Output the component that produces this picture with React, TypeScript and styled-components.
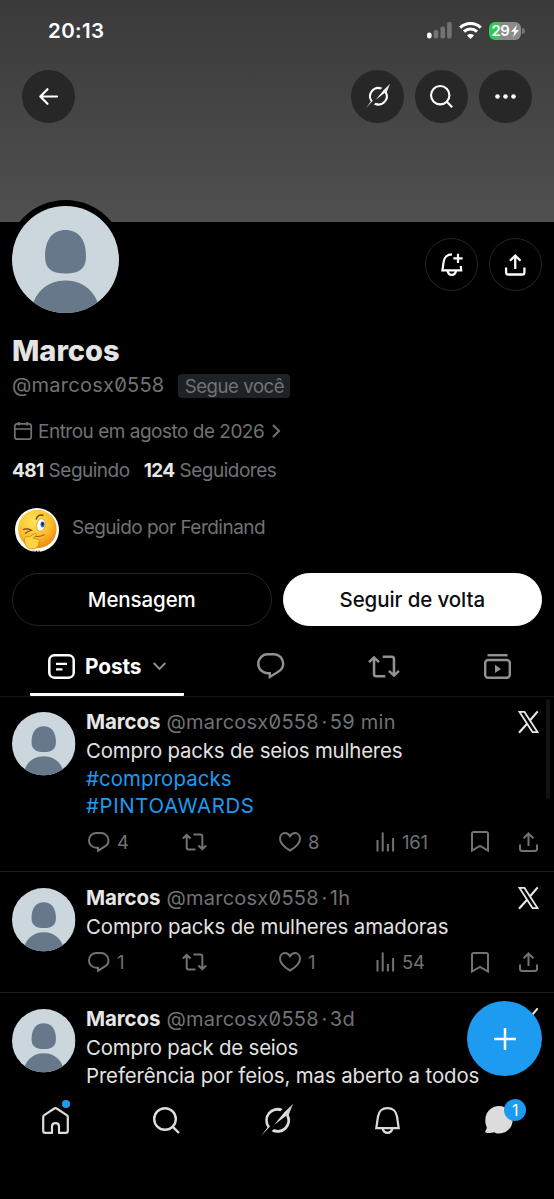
import React from 'react';
import styled, { createGlobalStyle } from 'styled-components';

const Global = createGlobalStyle`
  * { box-sizing: border-box; }
  html, body { margin: 0; padding: 0; background: #000; }
  body { font-family: Inter, "Liberation Sans", sans-serif; color: #e7e7e7; overflow: hidden; }
  svg { display: block; flex: none; overflow: visible; }
`;

const Screen = styled.div`
  position: relative;
  width: 554px;
  height: 1199px;
  display: flex;
  flex-direction: column;
  overflow: hidden;
  background: #000;
`;

const Banner = styled.header`
  height: 222px;
  flex: none;
  background: linear-gradient(#3a3a3a, #505050);
`;

const StatusBar = styled.div`
  height: 61px;
  padding: 0 29px 0 48px;
  display: flex;
  align-items: center;
  justify-content: space-between;
`;

const Clock = styled.span`
  font-size: 20.5px;
  font-weight: 600;
  letter-spacing: 0.4px;
  color: #fff;
`;

const StatusIcons = styled.div`
  display: flex;
  align-items: center;
  gap: 7px;
`;

const Battery = styled.div`
  width: 32px;
  height: 18px;
  border-radius: 6px;
  display: flex;
  align-items: center;
  justify-content: center;
  gap: 1px;
  background: linear-gradient(90deg, #34c759 0 10px, #8b8b8b 10px);
  color: #fff;
  font-size: 15px;
  font-weight: 600;
  letter-spacing: -0.4px;
`;

const BatteryWrap = styled.div`
  display: flex;
  align-items: center;
  gap: 1px;
`;

const BatteryTip = styled.i`
  width: 3px;
  height: 6px;
  border-radius: 0 3px 3px 0;
  background: #777;
`;

const TopButtons = styled.nav`
  margin-top: 8.5px;
  padding: 0 22px;
  display: flex;
  gap: 11px;
`;

const RoundButton = styled.button<{ $outlined?: boolean; $push?: boolean }>`
  width: 53px;
  height: 53px;
  padding: 0;
  flex: none;
  border-radius: 50%;
  border: ${p => (p.$outlined ? '1px solid #242627' : '0')};
  background: ${p => (p.$outlined ? '#000' : '#272727')};
  color: #fff;
  display: flex;
  align-items: center;
  justify-content: center;
  margin-right: ${p => (p.$push ? 'auto' : '0')};
`;

const Profile = styled.section`
  height: 405px;
  flex: none;
  padding: 0 12px;
  display: flex;
  flex-direction: column;
`;

const ProfileTop = styled.div`
  height: 113px;
  flex: none;
  display: flex;
  justify-content: space-between;
  align-items: flex-start;
`;

const AvatarRing = styled.div`
  margin: -22.5px 0 0 -6px;
  padding: 6px;
  border-radius: 50%;
  background: #000;
`;

const ProfileButtons = styled.div`
  display: flex;
  gap: 11px;
  padding-top: 16px;
`;

const Name = styled.h1`
  margin: 0;
  height: 34px;
  line-height: 32px;
  font-size: 29px;
  font-weight: 800;
  letter-spacing: 0;
  color: #e4e4e4;
`;

const HandleRow = styled.div`
  height: 32px;
  display: flex;
  align-items: center;
  gap: 14px;
`;

const Muted = styled.span<{ $ls?: number; $zero?: boolean; $size?: number }>`
  font-size: ${p => p.$size ?? 20}px;
  letter-spacing: ${p => p.$ls ?? 0}px;
  font-feature-settings: ${p => (p.$zero ? '"zero"' : 'normal')};
  color: #6f7375;
  white-space: nowrap;
`;

const Separator = styled.span`
  width: 11px;
  margin: 0 -6px;
  font-size: 20px;
  text-align: center;
  color: #6f7375;
`;

const Chip = styled.span`
  width: 112px;
  height: 24px;
  margin-top: 2px;
  border-radius: 4px;
  background: #1f2225;
  color: #6f7375;
  font-size: 18.6px;
  letter-spacing: -0.45px;
  line-height: 24px;
  text-align: center;
  white-space: nowrap;
`;

const JoinedRow = styled.div`
  height: 36px;
  margin-top: 12px;
  padding-left: 2px;
  display: flex;
  align-items: center;
  color: #6f7375;
  gap: 6px;
`;

const JoinedChevron = styled.span`
  margin-left: 2px;
`;

const Counts = styled.div`
  height: 42px;
  display: flex;
  align-items: center;
  gap: 14px;
`;

const Count = styled.span`
  display: flex;
  align-items: baseline;
  gap: 5px;
`;

const CountValue = styled.b`
  font-size: 19px;
  font-weight: 700;
  letter-spacing: -0.6px;
  color: #e7e7e7;
`;

const FollowedBy = styled.div`
  margin-top: 17px;
  padding-left: 3px;
  height: 44px;
  display: flex;
  align-items: center;
  gap: 13px;
`;

const FollowedText = styled.div`
  padding-bottom: 5px;
`;

const Actions = styled.div`
  margin-top: 21px;
  display: grid;
  grid-template-columns: 1fr 1fr;
  gap: 11px;
`;

const PillButton = styled.button<{ $filled?: boolean }>`
  height: 53px;
  border-radius: 27px;
  border: 1px solid ${p => (p.$filled ? '#fff' : '#232526')};
  background: ${p => (p.$filled ? '#fff' : '#000')};
  color: ${p => (p.$filled ? '#0b0d0f' : '#fff')};
  font-family: inherit;
  font-size: 20.5px;
  font-weight: 500;
  letter-spacing: -0.1px;
`;

const Tabs = styled.nav`
  height: 70px;
  flex: none;
  display: grid;
  grid-template-columns: 154px 1fr;
  padding: 0 0 0 30px;
  border-bottom: 1px solid #151617;
`;

const ActiveTab = styled.div`
  display: flex;
  align-items: center;
  justify-content: center;
  padding: 13px 0 1px;
  border-bottom: 3px solid #fff;
  border-radius: 1px;
  color: #fff;
`;

const TabList = styled.div`
  display: grid;
  grid-template-columns: 27px 32px 27px;
  align-items: center;
  justify-content: space-between;
  width: 254px;
  margin-left: 73px;
  padding-top: 10px;
  color: #929292;
`;

const TabLabel = styled.span`
  margin: 0 12px 0 10.5px;
  font-size: 20.8px;
  font-weight: 700;
  letter-spacing: -0.1px;
`;

const Feed = styled.main`
  flex: 1;
  min-height: 0;
  overflow: hidden;
`;

const PostCard = styled.article`
  display: grid;
  grid-template-columns: 63px 1fr;
  column-gap: 11px;
  padding: 11px 15px 17px 12px;
  border-bottom: 1px solid #1d1f20;
  & + & { padding-top: 12px; padding-bottom: 18px; }
`;

const PostAvatar = styled.div`
  padding-top: 4px;
`;

const PostBody = styled.div`
  min-width: 0;
`;

const PostHead = styled.div`
  height: 28px;
  margin-bottom: 1px;
  display: flex;
  align-items: center;
  justify-content: space-between;
`;

const Byline = styled.div`
  display: flex;
  align-items: baseline;
  gap: 6px;
  margin-top: -1px;
`;

const Author = styled.b`
  font-size: 20.5px;
  font-weight: 700;
  letter-spacing: -0.1px;
  color: #e7e7e7;
`;

const PostText = styled.p`
  margin: 0;
  font-size: 20.4px;
  line-height: 27.6px;
  color: #e2e2e2;
`;

const Line = styled.span<{ $tag?: boolean; $ls: number }>`
  display: block;
  white-space: nowrap;
  letter-spacing: ${p => p.$ls}px;
  color: ${p => (p.$tag ? '#1d9bf0' : 'inherit')};
`;

const Metrics = styled.div`
  height: 24px;
  margin-top: 10px;
  padding-left: 2px;
  display: grid;
  grid-template-columns: 94px 96.5px 97px 95.5px 47.5px auto;
  align-items: center;
  color: #6f7375;
`;

const Metric = styled.span`
  display: flex;
  align-items: center;
  gap: 7.5px;
  font-size: 18.5px;
  letter-spacing: -0.2px;
`;

const BottomBar = styled.nav`
  height: 112px;
  flex: none;
  padding-top: 17px;
  display: grid;
  grid-template-columns: repeat(5, 110.8px);
  background: #000;
  color: #dcdcdc;
`;

const NavItem = styled.div`
  position: relative;
  height: 32px;
  display: flex;
  align-items: center;
  justify-content: center;
`;

const Dot = styled.i`
  position: absolute;
  top: -4px;
  left: 62px;
  width: 8px;
  height: 8px;
  border-radius: 50%;
  background: #1d9bf0;
`;

const Badge = styled.span`
  position: absolute;
  top: -5px;
  left: 61px;
  width: 22px;
  height: 22px;
  border-radius: 50%;
  background: #1d9bf0;
  color: #fff;
  font-size: 16px;
  line-height: 22px;
  text-align: center;
`;

const Fab = styled.button`
  position: absolute;
  right: 12px;
  bottom: 123px;
  width: 75px;
  height: 75px;
  padding: 0;
  border: 0;
  border-radius: 50%;
  background: #1d9bf0;
  color: #fff;
  display: flex;
  align-items: center;
  justify-content: center;
`;

const ScrollThumb = styled.i`
  position: absolute;
  top: 699px;
  right: 4px;
  width: 4px;
  height: 100px;
  border-radius: 2px;
  background: #121212;
`;

const stroke = (w: number) => ({ fill: 'none', stroke: 'currentColor', strokeWidth: w });

const DefaultAvatar = ({ size, id }: { size: number; id: string }) => (
  <svg width={size} height={size} viewBox="0 0 107 107">
    <clipPath id={id}><circle cx="53.5" cy="53.5" r="53.5" /></clipPath>
    <g clipPath={`url(#${id})`}>
      <rect width="107" height="107" fill="#cbd6dd" />
      <path d="M53.500 24C66 24 74 33 74 50.500C74 62 68 67.500 53.500 67.500S33 62 33 50.500C33 33 41 24 53.500 24Z" fill="#66788a" />
      <path d="M19 107C21 87 35 74.500 53.500 74.500S86 87 88 107Z" fill="#66788a" />
    </g>
  </svg>
);

const ReplyIcon = ({ w = 21.5, sw = 2 }) => (
  <svg width={w} height={w * 20.5 / 21.5} viewBox="0 0 21.5 20.5" {...stroke(sw)}>
    <path d="M8.400 1H13.100A7.400 7.400 0 0 1 20.500 8.200C20.500 11.200 18.900 13.400 16.300 14.900L10 18.700V15.800H8.400A7.400 7.400 0 0 1 8.400 1Z" />
  </svg>
);

const RepostIcon = ({ w = 25, sw = 2 }) => (
  <svg width={w} height={w * 18 / 25} viewBox="0 0 25 18" {...stroke(sw)}>
    <path d="M.8 5.600L4.700 1.900L8.600 5.600M4.700 2.200V14.800Q4.700 16.600 6.500 16.600H13.500M11.500 1.400H18.500Q20.300 1.400 20.300 3.200V15.800M16.400 12.400L20.300 16.100L24.200 12.400" />
  </svg>
);

const HeartIcon = () => (
  <svg width="22" height="20" viewBox="0 0 22 20" {...stroke(2)}>
    <path d="M11 18.500C5.500 15.500 1 11.300 1 6.600C1 3.300 3.300 1.100 6 1.100C8.300 1.100 9.900 2.400 11 4.200C12.100 2.400 13.700 1.100 16 1.100C18.700 1.100 21 3.300 21 6.600C21 11.300 16.500 15.500 11 18.500Z" />
  </svg>
);

const ViewsIcon = () => (
  <svg width="19" height="20" viewBox="0 0 19 20" {...stroke(2)}>
    <path d="M1.500 8V19.500M6.700 .5V19.500M11.900 12V19.500M17.100 6V19.500" />
  </svg>
);

const BookmarkIcon = () => (
  <svg width="18" height="21" viewBox="0 0 18 21" {...stroke(2)}>
    <path d="M1 19.500V2.600Q1 1 2.600 1H15.400Q17 1 17 2.600V19.500L9 14.800Z" />
  </svg>
);

const ShareIcon = ({ w = 19, sw = 2 }) => (
  <svg width={w} height={w * 20 / 19} viewBox="0 0 19 20" {...stroke(sw)}>
    <path d="M9.500 14V1.500M4.600 6.300L9.500 1.500L14.400 6.300M1 12.500V16.800Q1 19 3.200 19H15.800Q18 19 18 16.800V12.500" />
  </svg>
);

const XLogo = () => (
  <svg width="21" height="22" viewBox="0 0 21 22" fill="none" stroke="#e7e7e7">
    <path d="M1.500 .9H6.500L19.500 21.100H14.500Z" strokeWidth="1.800" />
    <path d="M19.700 .4L11.900 9.500M9.100 12.700L1 21.700" strokeWidth="2.100" />
  </svg>
);

const GrokIcon = ({ w }: { w: number }) => (
  <svg width={w} height={w} viewBox="0 0 32 32" fill="currentColor">
    <path d="M21.600 4.900A12.400 12.400 0 0 0 6.450 23.400L0 32L9 22.400A9.500 9.500 0 0 1 19.400 7.300Z" />
    <path d="M10.500 27.200A12.400 12.400 0 0 0 27.700 10.800L32 0L25 11.600A9.500 9.500 0 0 1 13 25.100Z" />
    <path d="M32 0L23.400 8.300L13 21L25.200 11.700Z" />
  </svg>
);

const SearchIcon = ({ w, sw }: { w: number; sw: number }) => (
  <svg width={w} height={w} viewBox="0 0 27 27" {...stroke(sw)}>
    <circle cx="12" cy="12" r="10.800" />
    <path d="M19.800 19.800L26 26" />
  </svg>
);

const BackIcon = () => (
  <svg width="19" height="17" viewBox="0 0 19 17" {...stroke(2.200)} strokeLinecap="round" strokeLinejoin="round">
    <path d="M18 8.500H1.500M8.500 1.200L1.300 8.500L8.500 15.800" />
  </svg>
);

const MoreIcon = () => (
  <svg width="21" height="5" viewBox="0 0 21 5" fill="currentColor">
    <circle cx="2.500" cy="2.500" r="2.300" /><circle cx="10.500" cy="2.500" r="2.300" /><circle cx="18.500" cy="2.500" r="2.300" />
  </svg>
);

const BellPlusIcon = () => (
  <svg width="22" height="23" viewBox="0 0 22 23" {...stroke(2.200)}>
    <path d="M11 1.300C6.200 1.300 3 4.500 2.600 8.800L1.400 17.300H20.200L19.800 13M6.500 17.500C7 20.500 8.600 21.800 10.800 21.800S14.600 20.500 15.100 17.500M17 .8V10M12.400 5.400H21.600" />
  </svg>
);

const CalendarIcon = () => (
  <svg width="18" height="18" viewBox="0 0 18 18" {...stroke(1.700)}>
    <path d="M3.300 1.900H14.700Q17.200 1.900 17.200 4.400V14.700Q17.200 17.200 14.700 17.200H3.300Q.8 17.200 .8 14.700V4.400Q.8 1.900 3.300 1.900ZM.8 7H17.200M4.800 0V3.500M13.200 0V3.500" />
  </svg>
);

const ChevronRight = () => (
  <svg width="8" height="14" viewBox="0 0 8 14" {...stroke(2)}><path d="M1 1L7 7L1 13" /></svg>
);

const ChevronDown = () => (
  <svg width="13" height="8" viewBox="0 0 13 8" fill="none" stroke="#929292" strokeWidth="1.900"><path d="M.7 1L6.500 6.800L12.300 1" /></svg>
);

const PostsIcon = () => (
  <svg width="27" height="25" viewBox="0 0 27 25" {...stroke(2.500)}>
    <rect x="1.300" y="1.300" width="24.400" height="22.400" rx="5" />
    <path d="M8 9.800H19M8 15.300H14.500" strokeWidth="2.300" />
  </svg>
);

const VideosIcon = () => (
  <svg width="27" height="25" viewBox="0 0 27 25" {...stroke(2.400)}>
    <path d="M3.500 1.200H23.500" />
    <rect x="1.200" y="6" width="24.600" height="17.800" rx="3" />
    <path d="M11 10.700L17 14.900L11 19.100Z" fill="currentColor" stroke="none" />
  </svg>
);

const HomeIcon = () => (
  <svg width="27" height="27" viewBox="0 0 27 27" {...stroke(2.200)} strokeLinejoin="round">
    <path d="M1.200 10.200Q1.200 8.900 2.300 8.100L12.300 1.500Q13.500 .8 14.700 1.500L24.700 8.100Q25.800 8.900 25.800 10.200V23.800Q25.800 25.900 23.700 25.900H17V19.500Q17 16.200 13.500 16.200T10 19.500V25.900H3.300Q1.200 25.900 1.200 23.800Z" />
  </svg>
);

const BellIcon = () => (
  <svg width="25" height="27" viewBox="0 0 25 27" {...stroke(2.200)}>
    <path d="M12.500 1.200C7.500 1.200 3.700 4.300 3 9.500L1.300 21.200H23.700L22 9.500C21.300 4.300 17.500 1.200 12.500 1.200ZM7.500 21.400C8.300 24.300 10 25.800 12.500 25.800S16.700 24.300 17.500 21.400" />
  </svg>
);

const ChatIcon = () => (
  <svg width="28" height="28" viewBox="0 0 28 28" fill="currentColor">
    <path d="M14.200 0A13.600 13.600 0 1 1 13.500 27.600C11.500 27.500 10.500 27 9.200 26.300C6.500 27.200 3.500 27.500 .8 26.500C-.3 26.100 .2 25 .8 24.300C1.500 23.500 1.700 22.400 1.700 21C.6 18.800 .3 16.500 .3 14A13.900 13.900 0 0 1 14.200 0Z" />
  </svg>
);

const SignalIcon = () => (
  <svg width="25" height="17" viewBox="0 0 25 17">
    <rect x="0" y="10.500" width="4.600" height="6" rx="2.200" fill="#fff" />
    <rect x="6.700" y="8" width="4.600" height="8.500" rx="1.800" fill="#727272" />
    <rect x="13.400" y="4.500" width="4.600" height="12" rx="1.800" fill="#727272" />
    <rect x="20.100" y="0" width="4.600" height="16.500" rx="1.800" fill="#727272" />
  </svg>
);

const WifiIcon = () => (
  <svg width="23" height="17" viewBox="0 0 23 17" fill="none" stroke="#fff" strokeWidth="3">
    <path d="M1.200 5.600A14.800 14.800 0 0 1 21.800 5.600M5 9.600A9.300 9.300 0 0 1 18 9.600" />
    <path d="M11.500 17L8 13.400A5 5 0 0 1 15 13.400Z" fill="#fff" stroke="none" />
  </svg>
);

const BoltIcon = () => (
  <svg width="8" height="12" viewBox="0 0 8 12" fill="#fff"><path d="M6 0L0 6.700H3.500L2 12L8 5H4.600Z" /></svg>
);

const ThinkingFace = () => (
  <svg width="44" height="44" viewBox="0 0 44 44">
    <defs>
      <radialGradient id="face" cx="40%" cy="30%" r="72%">
        <stop offset="0" stopColor="#ffe45c" /><stop offset=".6" stopColor="#fdc02c" /><stop offset="1" stopColor="#e98a12" />
      </radialGradient>
      <clipPath id="faceClip"><circle cx="22" cy="22" r="22" /></clipPath>
    </defs>
    <g clipPath="url(#faceClip)">
      <rect width="44" height="44" fill="#fff" />
      <circle cx="22.300" cy="21" r="19.300" fill="url(#face)" />
      <ellipse cx="26" cy="17" rx="4.200" ry="6.300" fill="#fff" stroke="#c9882a" strokeWidth=".6" transform="rotate(12 26 17)" />
      <ellipse cx="27.500" cy="16.500" rx="2" ry="3" fill="#3568b8" />
      <circle cx="27.600" cy="16" r="1.200" fill="#111d35" />
      <path d="M21 11.500C22.500 7.500 25 6 28.500 7.500" fill="none" stroke="#70400b" strokeWidth="1.500" />
      <path d="M8 21.500Q12 20 16.500 22.300Q12.500 23.500 10 25.500" fill="none" stroke="#70400b" strokeWidth="1.200" />
      <path d="M19 28Q25 29.500 29.500 26.500" fill="none" stroke="#a75d10" strokeWidth="1.200" />
      <path d="M10 35C8 30 11 27 14 29L20 25.500C22 25.500 22 27 20.500 28L18 30L24 31.500C26 32.500 25 34 23.500 34C25 37 22 41 17 41C13 41 11 39 10 35Z" fill="#ffd347" stroke="#d88a18" strokeWidth=".9" />
      <path d="M17.500 43.500H25" stroke="#111" strokeWidth="1.400" strokeDasharray="2 1" />
    </g>
  </svg>
);

type Post = {
  age: string;
  lines: { text: string; ls: number; tag?: boolean }[];
  replies: string;
  likes: string;
  views: string;
};

const posts: Post[] = [
  {
    age: '59 min', replies: '4', likes: '8', views: '161',
    lines: [
      { text: 'Compro packs de seios mulheres', ls: -0.17 },
      { text: '#compropacks', ls: 0.1, tag: true },
      { text: '#PINTOAWARDS', ls: 0.62, tag: true },
    ],
  },
  {
    age: '1h', replies: '1', likes: '1', views: '54',
    lines: [{ text: 'Compro packs de mulheres amadoras', ls: -0.12 }],
  },
  {
    age: '3d', replies: '', likes: '', views: '',
    lines: [
      { text: 'Compro pack de seios', ls: -0.2 },
      { text: 'Preferência por feios, mas aberto a todos', ls: -0.12 },
    ],
  },
];

const PostItem = ({ post, index }: { post: Post; index: number }) => (
  <PostCard>
    <PostAvatar><DefaultAvatar size={63.5} id={`avatar${index}`} /></PostAvatar>
    <PostBody>
      <PostHead>
        <Byline>
          <Author>Marcos</Author>
          <Muted $zero $ls={0.25}>@marcosx0558</Muted>
          <Separator>·</Separator>
          <Muted $ls={0.25}>{post.age}</Muted>
        </Byline>
        <XLogo />
      </PostHead>
      <PostText>
        {post.lines.map(l => <Line key={l.text} $tag={l.tag} $ls={l.ls}>{l.text}</Line>)}
      </PostText>
      <Metrics>
        <Metric><ReplyIcon />{post.replies}</Metric>
        <Metric><RepostIcon /></Metric>
        <Metric><HeartIcon />{post.likes}</Metric>
        <Metric><ViewsIcon />{post.views}</Metric>
        <Metric><BookmarkIcon /></Metric>
        <Metric><ShareIcon /></Metric>
      </Metrics>
    </PostBody>
  </PostCard>
);

export default function App() {
  return (
    <Screen>
      <Global />
      <Banner>
        <StatusBar>
          <Clock>20:13</Clock>
          <StatusIcons>
            <SignalIcon />
            <WifiIcon />
            <BatteryWrap>
              <Battery>29<BoltIcon /></Battery>
              <BatteryTip />
            </BatteryWrap>
          </StatusIcons>
        </StatusBar>
        <TopButtons>
          <RoundButton $push><BackIcon /></RoundButton>
          <RoundButton><GrokIcon w={24} /></RoundButton>
          <RoundButton><SearchIcon w={23} sw={2.5} /></RoundButton>
          <RoundButton><MoreIcon /></RoundButton>
        </TopButtons>
      </Banner>
      <Profile>
        <ProfileTop>
          <AvatarRing><DefaultAvatar size={107} id="avatarMain" /></AvatarRing>
          <ProfileButtons>
            <RoundButton $outlined><BellPlusIcon /></RoundButton>
            <RoundButton $outlined><ShareIcon w={20.5} sw={2.1} /></RoundButton>
          </ProfileButtons>
        </ProfileTop>
        <Name>Marcos</Name>
        <HandleRow>
          <Muted $zero $ls={0.25}>@marcosx0558</Muted>
          <Chip>Segue você</Chip>
        </HandleRow>
        <JoinedRow>
          <CalendarIcon />
          <Muted $size={19} $ls={-0.5}>Entrou em agosto de 2026</Muted>
          <JoinedChevron><ChevronRight /></JoinedChevron>
        </JoinedRow>
        <Counts>
          <Count><CountValue>481</CountValue><Muted $size={19} $ls={-0.5}>Seguindo</Muted></Count>
          <Count><CountValue>124</CountValue><Muted $size={19} $ls={-0.5}>Seguidores</Muted></Count>
        </Counts>
        <FollowedBy>
          <ThinkingFace />
          <FollowedText><Muted $size={19} $ls={-0.52}>Seguido por Ferdinand</Muted></FollowedText>
        </FollowedBy>
        <Actions>
          <PillButton>Mensagem</PillButton>
          <PillButton $filled>Seguir de volta</PillButton>
        </Actions>
      </Profile>
      <Tabs>
        <ActiveTab><PostsIcon /><TabLabel>Posts</TabLabel><ChevronDown /></ActiveTab>
        <TabList>
          <ReplyIcon w={27.5} sw={1.9} />
          <RepostIcon w={32} sw={2} />
          <VideosIcon />
        </TabList>
      </Tabs>
      <Feed>
        {posts.map((p, i) => <PostItem key={p.age} post={p} index={i} />)}
      </Feed>
      <BottomBar>
        <NavItem><HomeIcon /><Dot /></NavItem>
        <NavItem><SearchIcon w={27} sw={2.4} /></NavItem>
        <NavItem><GrokIcon w={32} /></NavItem>
        <NavItem><BellIcon /></NavItem>
        <NavItem><ChatIcon /><Badge>1</Badge></NavItem>
      </BottomBar>
      <ScrollThumb />
      <Fab>
        <svg width="22" height="22" viewBox="0 0 22 22" {...stroke(2.500)}><path d="M11 0V22M0 11H22" /></svg>
      </Fab>
    </Screen>
  );
}
